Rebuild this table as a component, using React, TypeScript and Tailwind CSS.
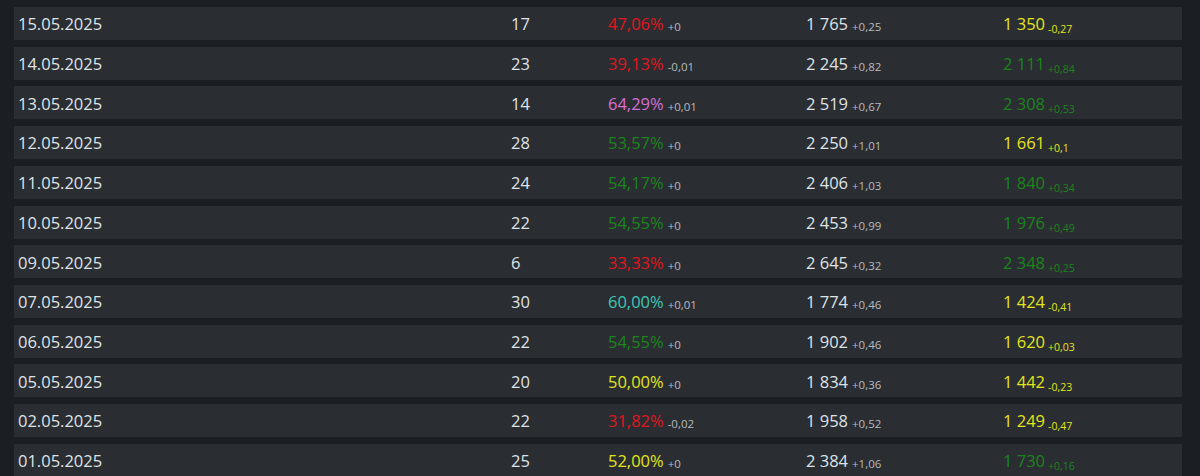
import React from "react";

type Row = {
  d: string;
  c: string;
  p: string;
  pc: string;
  pd: string;
  n: string;
  nd: string;
  l: string;
  lc: string;
  ld: string;
};

const RED = "text-[#e0161d]";
const GREEN = "text-[#1b851b]";
const YEL = "text-[#e3e41c]";
const PINK = "text-[#d86fd8]";
const TEAL = "text-[#3cc8b5]";

const rows: Row[] = [
  { d: "15.05.2025", c: "17", p: "47,06%", pc: RED, pd: "+0", n: "1 765", nd: "+0,25", l: "1 350", lc: YEL, ld: "-0,27" },
  { d: "14.05.2025", c: "23", p: "39,13%", pc: RED, pd: "-0,01", n: "2 245", nd: "+0,82", l: "2 111", lc: GREEN, ld: "+0,84" },
  { d: "13.05.2025", c: "14", p: "64,29%", pc: PINK, pd: "+0,01", n: "2 519", nd: "+0,67", l: "2 308", lc: GREEN, ld: "+0,53" },
  { d: "12.05.2025", c: "28", p: "53,57%", pc: GREEN, pd: "+0", n: "2 250", nd: "+1,01", l: "1 661", lc: YEL, ld: "+0,1" },
  { d: "11.05.2025", c: "24", p: "54,17%", pc: GREEN, pd: "+0", n: "2 406", nd: "+1,03", l: "1 840", lc: GREEN, ld: "+0,34" },
  { d: "10.05.2025", c: "22", p: "54,55%", pc: GREEN, pd: "+0", n: "2 453", nd: "+0,99", l: "1 976", lc: GREEN, ld: "+0,49" },
  { d: "09.05.2025", c: "6", p: "33,33%", pc: RED, pd: "+0", n: "2 645", nd: "+0,32", l: "2 348", lc: GREEN, ld: "+0,25" },
  { d: "07.05.2025", c: "30", p: "60,00%", pc: TEAL, pd: "+0,01", n: "1 774", nd: "+0,46", l: "1 424", lc: YEL, ld: "-0,41" },
  { d: "06.05.2025", c: "22", p: "54,55%", pc: GREEN, pd: "+0", n: "1 902", nd: "+0,46", l: "1 620", lc: YEL, ld: "+0,03" },
  { d: "05.05.2025", c: "20", p: "50,00%", pc: YEL, pd: "+0", n: "1 834", nd: "+0,36", l: "1 442", lc: YEL, ld: "-0,23" },
  { d: "02.05.2025", c: "22", p: "31,82%", pc: RED, pd: "-0,02", n: "1 958", nd: "+0,52", l: "1 249", lc: YEL, ld: "-0,47" },
  { d: "01.05.2025", c: "25", p: "52,00%", pc: YEL, pd: "+0", n: "2 384", nd: "+1,06", l: "1 730", lc: GREEN, ld: "+0,16" },
];

export default function App() {
  return (
    <div
      className="w-[1200px] h-[476px] overflow-hidden bg-[#1b1e22] pl-[14px] pt-[7px]"
      style={{ fontFamily: '"Open Sans", "Noto Sans", sans-serif' }}
    >
      <div className="flex flex-col gap-[6.73px] w-[1168px]">
        {rows.map((r, i) => (
          <div
            key={i}
            className="flex items-center h-[33px] shrink-0 bg-[#2a2d32] pt-[2px] text-[16.5px] text-[#dfe3e6] leading-none"
          >
            <div className="w-[493px] pl-[4px]">{r.d}</div>
            <div className="w-[97px] pl-[4px]">{r.c}</div>
            <div className="w-[198px] pl-[4px]">
              <span className={r.pc}>{r.p}</span>
              <span className="relative top-[1px] ml-[4px] text-[11.5px] text-[#b7bbbf]">{r.pd}</span>
            </div>
            <div className="w-[197px] pl-[4px]">
              <span>{r.n}</span>
              <span className="relative top-[1px] ml-[4px] text-[11.5px] text-[#b7bbbf]">{r.nd}</span>
            </div>
            <div className="flex-1 pl-[4px]">
              <span className={r.lc}>{r.l}</span>
              <span className={`relative top-[3px] ml-[3px] text-[10.5px] ${r.lc}`}>{r.ld}</span>
            </div>
          </div>
        ))}
      </div>
    </div>
  );
}
